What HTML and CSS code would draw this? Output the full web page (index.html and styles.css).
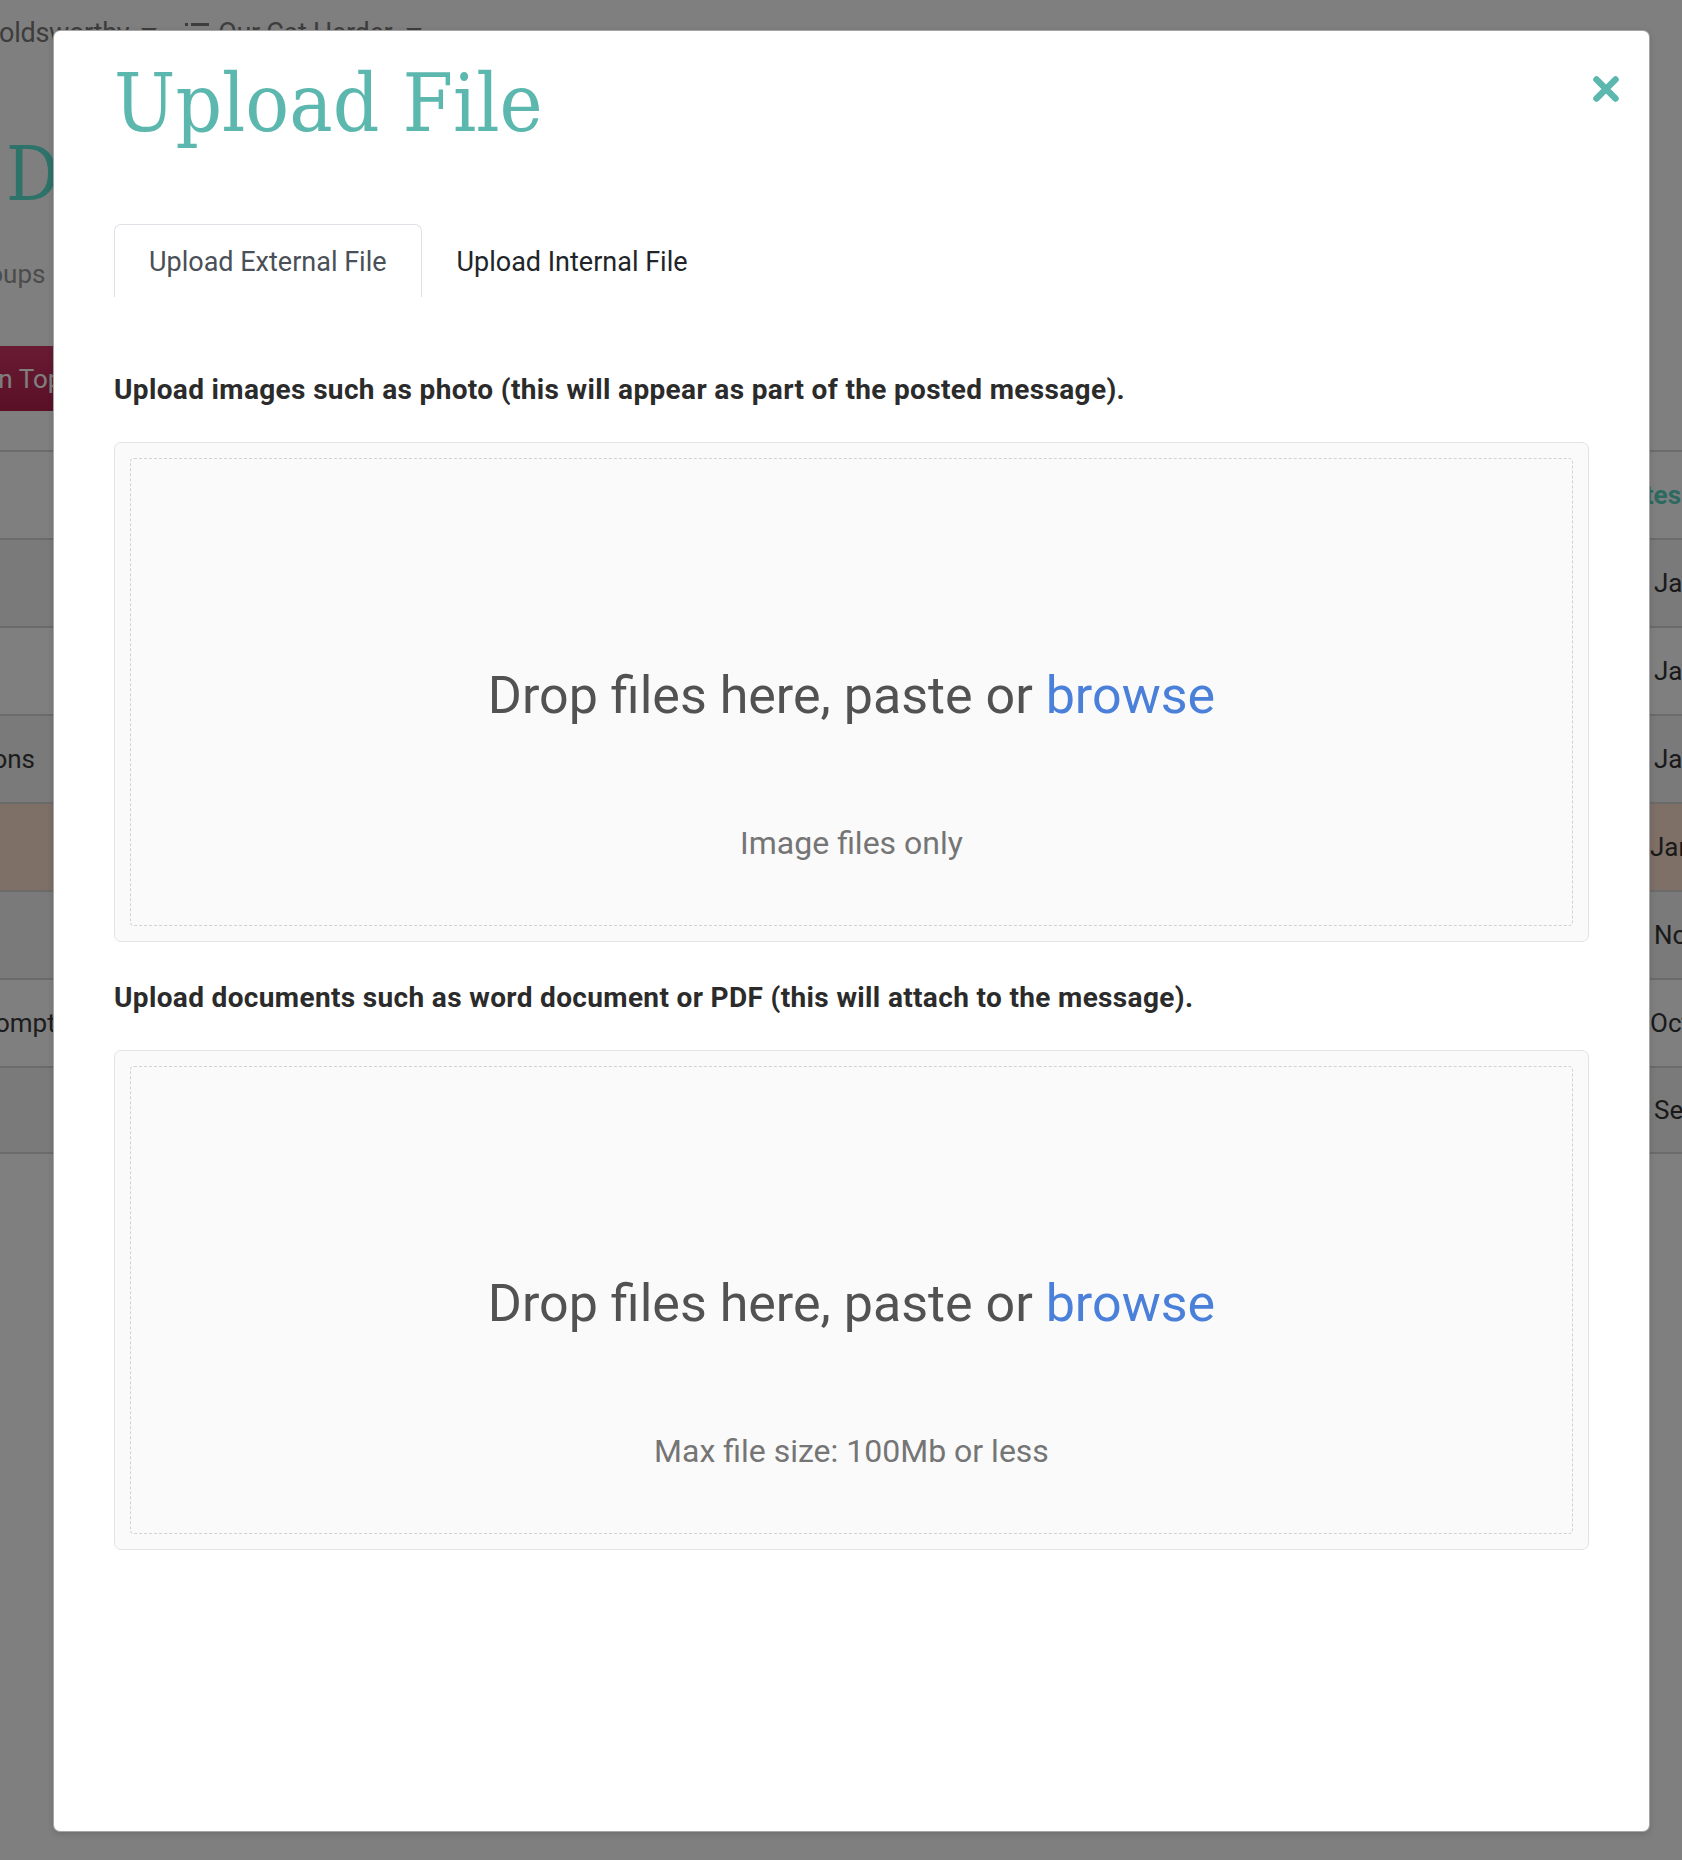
FILE: index.html
```html
<!DOCTYPE html>
<html lang="en">
<head>
<meta charset="utf-8">
<title>Upload File</title>
<link rel="stylesheet" href="styles.css">
</head>
<body>
<div class="app">
  <header class="topnav">
    <span class="nav-user">Goldsworthy</span>
    <span class="caret"></span>
    <span class="nav-group">
      <svg class="list-icon" width="24" height="20" viewBox="0 0 24 20"><rect x="0" y="1" width="3" height="3"/><rect x="6" y="1" width="18" height="3"/><rect x="0" y="8" width="3" height="3"/><rect x="6" y="8" width="18" height="3"/></svg>
      Our Cat Herder
    </span>
    <span class="caret"></span>
  </header>
  <div class="page-head">
    <h1 class="page-title">Dashboard</h1>
    <div class="page-sub">Groups</div>
    <button class="btn-top">Pin on Top</button>
  </div>
  <div class="table">
    <div class="row head"><div class="cell-l"></div><div></div><div class="cell-r"><span class="th-date">Dates</span></div></div>
    <div class="row alt"><div class="cell-l"></div><div></div><div class="cell-r">Jan 28, 2021</div></div>
    <div class="row"><div class="cell-l"></div><div></div><div class="cell-r">Jan 19, 2021</div></div>
    <div class="row alt"><div class="cell-l">Reactions</div><div></div><div class="cell-r">Jan 04, 2021</div></div>
    <div class="row warn"><div class="cell-l"></div><div></div><div class="cell-r shift">Jan 02, 2021</div></div>
    <div class="row alt"><div class="cell-l"></div><div></div><div class="cell-r">Nov 17, 2020</div></div>
    <div class="row"><div class="cell-l">Ask Prompt</div><div></div><div class="cell-r shift">Oct 09, 2020</div></div>
    <div class="row alt"><div class="cell-l"></div><div></div><div class="cell-r">Sep 21, 2020</div></div>
  </div>
</div>

<div class="backdrop"></div>

<div class="modal" role="dialog">
  <div class="modal-header">
    <h2 class="modal-title">Upload File</h2>
    <button class="close" aria-label="Close">
      <svg width="28" height="28" viewBox="0 0 28 28"><path d="M4.5 4.5 L23.5 23.5 M23.5 4.5 L4.5 23.5" fill="none" stroke="#5cb8ae" stroke-width="6.5" stroke-linecap="round"/></svg>
    </button>
  </div>

  <ul class="tabs">
    <li class="tab active">Upload External File</li>
    <li class="tab">Upload Internal File</li>
  </ul>

  <div class="tab-content">
    <p class="label">Upload images such as photo (this will appear as part of the posted message).</p>
    <div class="dropzone">
      <div class="drop-inner">
        <div class="drop-title">Drop files here, paste or <span class="browse">browse</span></div>
        <div class="drop-note">Image files only</div>
      </div>
    </div>

    <p class="label">Upload documents such as word document or PDF (this will attach to the message).</p>
    <div class="dropzone">
      <div class="drop-inner">
        <div class="drop-title">Drop files here, paste or <span class="browse">browse</span></div>
        <div class="drop-note">Max file size: 100Mb or less</div>
      </div>
    </div>
  </div>
</div>
</body>
</html>
```

FILE: styles.css
```css
* { box-sizing: border-box; }

html, body { margin: 0; padding: 0; }

body {
  width: 1682px;
  height: 1860px;
  overflow: hidden;
  position: relative;
  background: #ffffff;
  font-family: Roboto, "Noto Sans", sans-serif;
}

/* ---------- background application ---------- */
.app { width: 1682px; }

.topnav {
  display: flex;
  align-items: flex-start;
  padding-top: 20px;
  height: 64px;
  font-size: 27px;
  line-height: 27px;
  color: #7a7a7a;
}
.nav-user { margin-left: -19px; letter-spacing: -0.3px; }
.caret {
  width: 0;
  height: 0;
  margin: 8px 0 0 12px;
  border-left: 8px solid transparent;
  border-right: 8px solid transparent;
  border-top: 10px solid #7a7a7a;
}
.nav-group { display: flex; gap: 9px; margin-left: 28px; margin-right: 2px; letter-spacing: -0.3px; }
.list-icon { fill: #7a7a7a; margin-top: 2px; }

.page-head { display: flex; flex-direction: column; align-items: flex-start; }
.page-title {
  margin: 73px 0 0 6px;
  font-family: "DejaVu Serif", serif;
  font-stretch: condensed;
  font-weight: normal;
  font-size: 74px;
  line-height: 74px;
  color: #5ae6d4;
}
.page-sub {
  margin: 50px 0 0 -38px;
  font-size: 26px;
  line-height: 26px;
  color: #999;
}
.btn-top {
  margin: 59px 0 0 -80px;
  height: 65px;
  padding: 0 20px;
  border: 0;
  border-radius: 6px;
  background: linear-gradient(#d23766, #b4204c);
  color: #fff;
  font-family: Roboto, sans-serif;
  font-size: 26px;
}

.table { margin: 39px 0 0 -96px; width: 1900px; }
.row {
  display: grid;
  grid-template-columns: 208px 1526px 1fr;
  height: 88px;
  align-items: center;
  border-top: 2px solid #d6d6d6;
  font-size: 26px;
  color: #333;
}
.row:last-child { border-bottom: 2px solid #d6d6d6; }
.row.alt { background: #f4f4f4; }
.row.warn { background: #fce0ce; }
.cell-l { padding-left: 16px; color: #3a3a3a; white-space: nowrap; }
.cell-r { padding-left: 16px; white-space: nowrap; }
.cell-r.shift { padding-left: 12px; }
.th-date { margin-left: -40px; font-weight: bold; color: #56d2c2; }

.backdrop {
  position: absolute;
  inset: 0;
  background: rgba(0, 0, 0, 0.5);
}

/* ---------- modal ---------- */
.modal {
  position: absolute;
  left: 53px;
  top: 30px;
  width: 1597px;
  height: 1802px;
  background: #fff;
  border: 1px solid rgba(0, 0, 0, 0.35);
  border-radius: 7px;
  padding: 30px 60px 0;
  box-shadow: 0 2px 6px rgba(0, 0, 0, 0.15);
}

.modal-header {
  display: flex;
  justify-content: space-between;
  align-items: flex-start;
}
.modal-title {
  margin: 2px 0 0;
  font-family: "DejaVu Serif", serif;
  font-stretch: condensed;
  font-weight: normal;
  font-size: 81px;
  line-height: 81px;
  color: #5cb8ae;
}
.close {
  margin: 14px -31px 0 0;
  padding: 0;
  border: 0;
  background: none;
  width: 28px;
  height: 28px;
  display: block;
}
.close svg { display: block; }

.tabs {
  list-style: none;
  margin: 80px 0 0;
  padding: 0;
  display: flex;
}
.tab {
  height: 73px;
  line-height: 75px;
  padding: 0 34px;
  border: 1px solid transparent;
  border-bottom: 0;
  border-radius: 7px 7px 0 0;
  font-size: 27px;
  color: #212529;
}
.tab.active {
  border-color: #dee2e6;
  color: #495057;
}

.tab-content { padding-top: 37px; }

.label {
  margin: 38px 0 34px;
  font-size: 28px;
  line-height: 36px;
  letter-spacing: 0.35px;
  font-weight: bold;
  color: #2b2b2b;
}

.dropzone {
  height: 500px;
  padding: 15px;
  background: #fafafa;
  border: 1px solid #e3e3e3;
  border-radius: 7px;
}
.drop-inner {
  height: 100%;
  border: 1px dashed #d2d2d2;
  border-radius: 4px;
  display: grid;
  grid-template-rows: 1fr auto 1fr;
  justify-items: center;
}
.drop-title {
  grid-row: 2;
  margin-top: 8px;
  font-size: 52px;
  line-height: 60px;
  color: #525252;
}
.browse { color: #4a80d9; }
.drop-note {
  grid-row: 3;
  align-self: start;
  margin-top: 97px;
  font-size: 32px;
  line-height: 40px;
  color: #757575;
}
```
